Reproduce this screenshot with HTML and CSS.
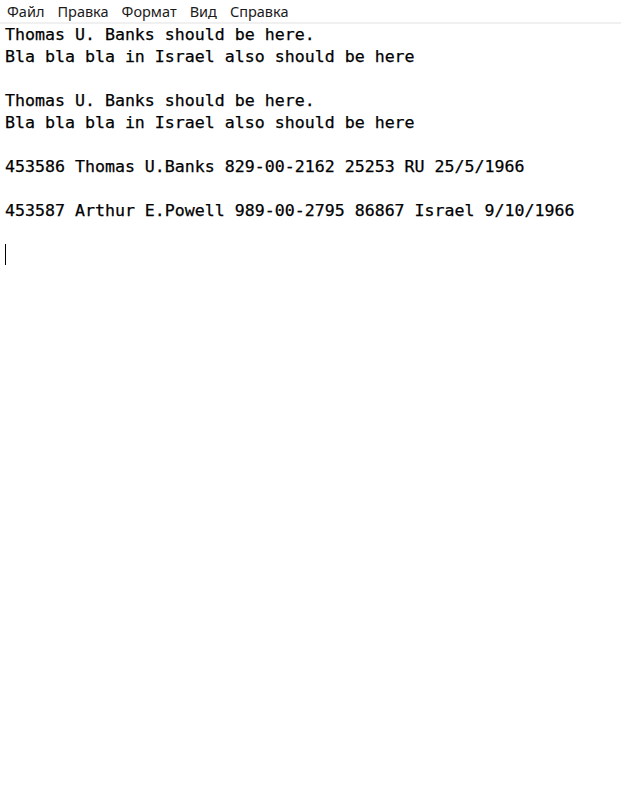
FILE: index.html
```html
<!DOCTYPE html>
<html lang="ru">
<head>
<meta charset="utf-8">
<title>Блокнот</title>
<link rel="stylesheet" href="styles.css">
</head>
<body>
<div class="menubar">
  <span class="menu-item">Файл</span>
  <span class="menu-item">Правка</span>
  <span class="menu-item">Формат</span>
  <span class="menu-item">Вид</span>
  <span class="menu-item">Справка</span>
</div>
<div class="editor">
<div class="line">Thomas U. Banks should be here.</div>
<div class="line">Bla bla bla in Israel also should be here</div>
<div class="line"></div>
<div class="line">Thomas U. Banks should be here.</div>
<div class="line">Bla bla bla in Israel also should be here</div>
<div class="line"></div>
<div class="line">453586 Thomas U.Banks 829-00-2162 25253 RU 25/5/1966</div>
<div class="line"></div>
<div class="line">453587 Arthur E.Powell 989-00-2795 86867 Israel 9/10/1966</div>
<div class="line"></div>
<div class="line"><span class="caret"></span></div>
</div>
</body>
</html>
```
FILE: styles.css
```css
html, body {
  margin: 0;
  padding: 0;
  background: #ffffff;
}
body {
  width: 621px;
  height: 804px;
  overflow: hidden;
}
.menubar {
  display: flex;
  gap: 13px;
  height: 22px;
  align-items: center;
  padding-left: 7px;
  font-family: "Noto Sans", "Open Sans", sans-serif;
  font-size: 14.5px;
  color: #1a1a1a;
  border-bottom: 2px solid #f0f0f0;
  box-sizing: content-box;
}
.menu-item {
  line-height: 22px;
}
.editor {
  padding-left: 5px;
  font-family: "DejaVu Sans Mono", "Liberation Mono", monospace;
  font-size: 16.6px;
  color: #000;
  -webkit-text-stroke: 0.25px #000;
}
.line {
  height: 22px;
  line-height: 22px;
  white-space: pre;
}
.caret {
  display: inline-block;
  width: 1px;
  height: 21px;
  background: #000;
  vertical-align: top;
}
```
